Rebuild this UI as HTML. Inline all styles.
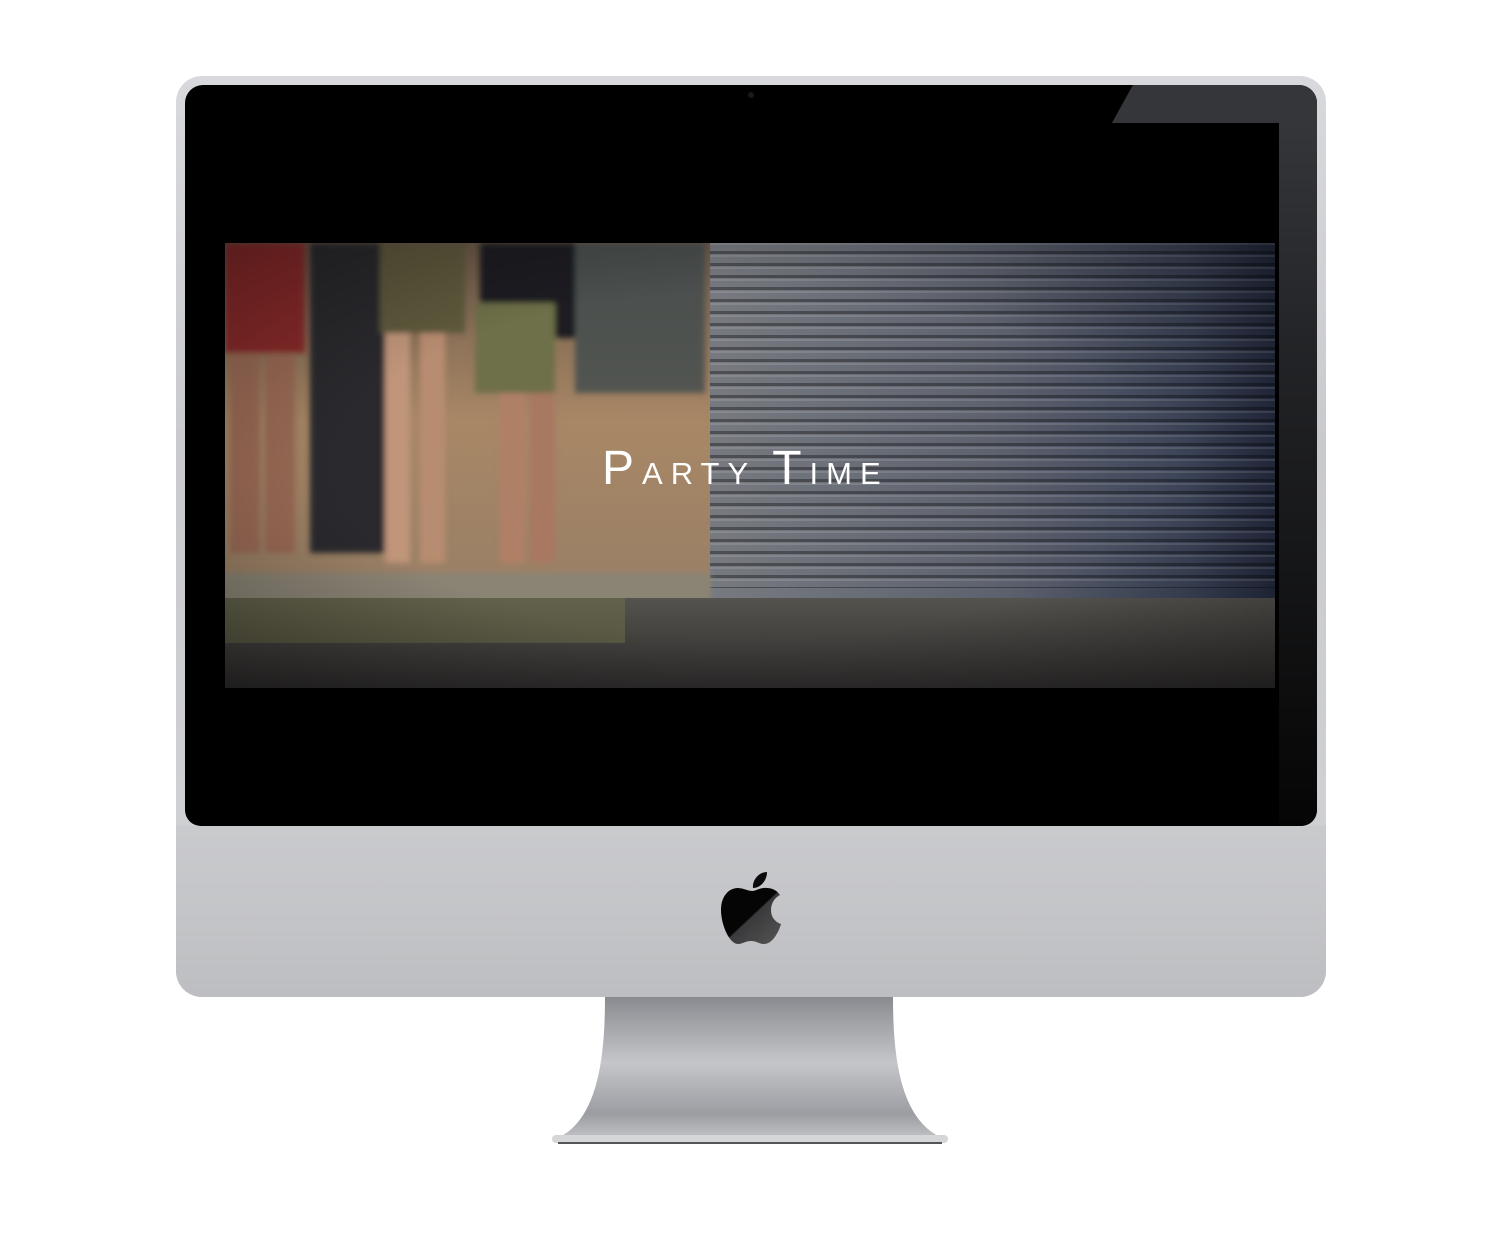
<!DOCTYPE html>
<html><head><style>
*{margin:0;padding:0}
body{width:1500px;height:1250px;background:#fff;position:relative;overflow:hidden;font-family:"Liberation Sans",sans-serif}
.abs{position:absolute}
#body{left:176px;top:76px;width:1150px;height:921px;border-radius:26px;background:linear-gradient(#d8d9dc,#c9cacd 40%,#cfd0d3 80%,#c6c7ca);}
#bezel{left:185px;top:85px;width:1132px;height:741px;border-radius:18px 18px 16px 16px;background:#000;overflow:hidden}
#chin{left:176px;top:826px;width:1150px;height:171px;border-radius:0 0 26px 26px;background:linear-gradient(#c9cacd,#c4c5c8 50%,#bdbec1)}
#screen{left:225px;top:243px;width:1050px;height:445px;overflow:hidden}
.txt{left:602px;top:441px;color:#fff;white-space:nowrap;font-weight:normal;letter-spacing:8px}
</style></head><body>
<div id="body" class="abs"></div>
<div id="chin" class="abs"></div>
<div id="bezel" class="abs">
  <svg class="abs" style="left:0;top:0" width="1132" height="741">
    <defs>
      <linearGradient id="gl" x1="0" y1="0" x2="0" y2="1">
        <stop offset="0" stop-color="#38393d"/><stop offset="0.35" stop-color="#232427"/><stop offset="1" stop-color="#050505"/>
      </linearGradient>
    </defs>
    <polygon points="948,0 1132,0 1132,741 1094,741 1094,38 927,38" fill="url(#gl)"/>
    <polygon points="948,0 1132,0 1132,38 927,38" fill="#35363a"/>
    <circle cx="566" cy="10" r="3" fill="#1a1a1a"/>
  </svg>
</div>
<div id="screen" class="abs">
  <svg width="1050" height="445">
    <defs>
      <linearGradient id="shut" x1="0" y1="0" x2="1" y2="0">
        <stop offset="0" stop-color="#777a80"/><stop offset="0.5" stop-color="#5d626e"/><stop offset="0.85" stop-color="#3c4458"/><stop offset="1" stop-color="#252c40"/>
      </linearGradient>
      <pattern id="str" width="12" height="12" patternUnits="userSpaceOnUse">
        <rect y="8" width="12" height="3" fill="#000" opacity="0.35"/><rect y="0" width="12" height="2" fill="#fff" opacity="0.12"/>
      </pattern>
      <linearGradient id="wall" x1="0" y1="0" x2="0" y2="1">
        <stop offset="0" stop-color="#6d5a4a"/><stop offset="0.4" stop-color="#a88765"/><stop offset="0.75" stop-color="#9a8066"/><stop offset="1" stop-color="#5a4c40"/>
      </linearGradient>
      <linearGradient id="gnd" x1="0" y1="0" x2="0" y2="1">
        <stop offset="0" stop-color="#55534e"/><stop offset="1" stop-color="#2e2c2c"/>
      </linearGradient>
      <filter id="bl"><feGaussianBlur stdDeviation="3"/></filter>
    </defs>
    <rect width="1050" height="445" fill="url(#wall)"/>
    <rect x="485" width="565" height="360" fill="url(#shut)"/>
    <rect x="485" width="565" height="345" fill="url(#str)"/>
    <g filter="url(#bl)">
    <rect x="0" y="0" width="80" height="110" fill="#8a2a2a"/>
    <rect x="85" y="0" width="85" height="310" fill="#2a2a2e"/>
    <rect x="155" y="0" width="85" height="90" fill="#5e5a3c"/>
    <rect x="255" y="0" width="95" height="95" fill="#1c1d22"/>
    <rect x="350" y="0" width="130" height="150" fill="#3d4a4c" opacity="0.8"/>
    <rect x="5" y="110" width="30" height="200" fill="#9a6a55"/><rect x="40" y="110" width="30" height="200" fill="#9a6a55"/>
    <rect x="160" y="90" width="25" height="230" fill="#c0957a"/><rect x="195" y="90" width="25" height="230" fill="#b88c70"/>
    <rect x="275" y="100" width="25" height="220" fill="#b08066"/><rect x="305" y="100" width="25" height="220" fill="#a87860"/>
    <rect x="250" y="60" width="80" height="90" fill="#6e7048"/>
    <rect x="0" y="330" width="485" height="30" fill="#8a8474"/>
    </g>
    <rect x="0" y="355" width="1050" height="90" fill="url(#gnd)"/>
    <rect x="0" y="355" width="400" height="45" fill="#6f7048" opacity="0.5"/>
  </svg>
  <div class="abs" style="left:0;top:0;width:1050px;height:445px;background:radial-gradient(ellipse at 50% 50%,rgba(0,0,0,0) 55%,rgba(0,0,0,0.35))"></div>
</div>
<div class="abs txt"><span style="font-size:48px">P</span><span style="font-size:31px">ARTY </span><span style="font-size:48px">T</span><span style="font-size:31px">IME</span></div>
<svg class="abs" style="left:715px;top:868px" width="72" height="80" viewBox="0 0 72 80">
  <defs><linearGradient id="ap" x1="0" y1="0" x2="1" y2="1"><stop offset="0.5" stop-color="#050505"/><stop offset="0.52" stop-color="#3a3a3c"/><stop offset="1" stop-color="#555"/></linearGradient></defs>
  <path d="M52,4 C52,12 46,20 38,20 C37,12 44,4 52,4Z" fill="#0a0a0a"/>
  <path d="M56,42 C56,34 61,29 65,27 C61,21 55,20 52,20 C46,19 41,23 37,23 C33,23 28,20 23,20 C14,20 6,28 6,42 C6,56 14,76 23,76 C28,76 30,73 36,73 C42,73 44,76 49,76 C58,76 64,63 66,56 C60,54 56,49 56,42Z" fill="url(#ap)"/>
</svg>
<svg class="abs" style="left:550px;top:997px" width="400" height="150">
  <defs>
    <linearGradient id="st" x1="0" y1="0" x2="0" y2="1">
      <stop offset="0" stop-color="#8a8b90"/><stop offset="0.45" stop-color="#c5c6ca"/><stop offset="0.8" stop-color="#9c9da2"/><stop offset="1" stop-color="#c8c9cc"/>
    </linearGradient>
  </defs>
  <path d="M55,0 L343,0 C343,60 350,120 390,140 L395,146 L5,146 L10,140 C48,120 55,60 55,0Z" fill="url(#st)"/>
  <rect x="2" y="138" width="396" height="8" rx="4" fill="#d5d6d8"/>
  <rect x="8" y="145" width="384" height="2" fill="#555"/>
</svg>
</body></html>
